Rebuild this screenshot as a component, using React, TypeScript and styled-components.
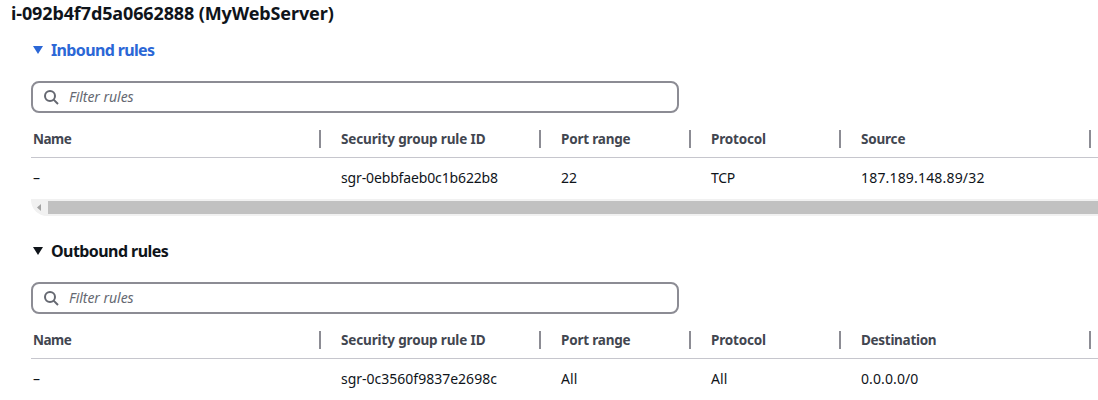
import React from "react";
import styled, { createGlobalStyle } from "styled-components";

const GlobalStyle = createGlobalStyle`
  * { box-sizing: border-box; }
  body {
    margin: 0;
    overflow: hidden;
    background: #fff;
    color: #0f141a;
    font-family: "Noto Sans", "Open Sans", sans-serif;
    font-size: 14px;
  }
`;

const Page = styled.main`
  width: 100%;
  height: 400px;
  overflow: hidden;
  display: flex;
  flex-direction: column;
`;

const Title = styled.h1<{ $track: number }>`
  margin: 0;
  padding-left: 11px;
  height: 26px;
  line-height: 26px;
  font-size: 18px;
  font-weight: 700;
  letter-spacing: ${(p) => p.$track}px;
  white-space: nowrap;
`;

const Section = styled.section`
  flex: none;
  height: 201px;
  display: flex;
  flex-direction: column;
  padding-left: 31px;
`;

const SectionToggle = styled.div<{ $active?: boolean }>`
  height: 24px;
  margin: 12px 0 19px;
  display: flex;
  align-items: center;
  color: ${(p) => (p.$active ? "#2b67d6" : "#0f141a")};
`;

const Caret = styled.svg`
  width: 10px;
  height: 8px;
  margin: 0 8px 1px 2px;
  fill: currentColor;
`;

const SectionName = styled.h2<{ $track: number }>`
  margin: 0;
  font-size: 16px;
  line-height: 24px;
  font-weight: 700;
  letter-spacing: ${(p) => p.$track}px;
`;

const FilterBox = styled.div`
  flex: none;
  width: 648px;
  height: 32px;
  border: 2px solid #8c8c94;
  border-radius: 8px;
  display: flex;
  align-items: center;
  padding-left: 10px;
  gap: 10px;
`;

const SearchIcon = styled.svg`
  width: 16px;
  height: 16px;
  fill: none;
  stroke: #656871;
  stroke-width: 2;
`;

const Placeholder = styled.span<{ $track: number }>`
  color: #656871;
  font-style: italic;
  line-height: 20px;
  letter-spacing: ${(p) => p.$track}px;
`;

const Row = styled.div<{ $head?: boolean }>`
  flex: none;
  display: grid;
  grid-template-columns: 290px 220px 150px 150px 250px 1fr;
  align-items: center;
  height: ${(p) => (p.$head ? "34px" : "41px")};
  margin-top: ${(p) => (p.$head ? "11px" : "0")};
  border-bottom: ${(p) => (p.$head ? "1px solid #c6c6cd" : "0")};
`;

const Cell = styled.div<{ $track: number; $head?: boolean }>`
  height: 18px;
  line-height: 18px;
  padding-left: 20px;
  margin-top: ${(p) => (p.$head ? "-3px" : "-2px")};
  border-right: ${(p) => (p.$head ? "2px solid #8c8c94" : "0")};
  color: ${(p) => (p.$head ? "#424650" : "#0f141a")};
  font-size: ${(p) => (p.$head ? "13.5px" : "14px")};
  font-weight: ${(p) => (p.$head ? 700 : 400)};
  letter-spacing: ${(p) => p.$track}px;
  white-space: nowrap;
  &:first-child { padding-left: 2px; }
`;

const ScrollTrack = styled.div`
  flex: none;
  height: 17px;
  background: #f1f1f1;
  border-bottom-left-radius: 16px;
  display: flex;
  align-items: center;
`;

const ScrollArrow = styled.svg`
  width: 4px;
  height: 7px;
  margin: 0 7px 0 6px;
  fill: #a3a3a3;
`;

const ScrollThumb = styled.div`
  flex: 1;
  height: 13px;
  background: #c1c1c1;
`;

type Text = [string, number];

interface RulesProps {
  name: Text;
  active?: boolean;
  heads: Text[];
  cells: Text[];
  scroll?: boolean;
}

function Rules({ name, active, heads, cells, scroll }: RulesProps) {
  return (
    <Section>
      <SectionToggle $active={active}>
        <Caret viewBox="0 0 10 8">
          <path d="M0 0h10L5 8z" />
        </Caret>
        <SectionName $track={name[1]}>{name[0]}</SectionName>
      </SectionToggle>
      <FilterBox>
        <SearchIcon viewBox="0 0 16 16">
          <circle cx="7" cy="7" r="5" />
          <path d="M10.6 10.6 15 15" />
        </SearchIcon>
        <Placeholder $track={-0.04}>Filter rules</Placeholder>
      </FilterBox>
      <Row $head>
        {heads.map(([text, track]) => (
          <Cell key={text} $head $track={track}>{text}</Cell>
        ))}
      </Row>
      <Row>
        {cells.map(([text, track], i) => (
          <Cell key={i} $track={track}>{text}</Cell>
        ))}
      </Row>
      {scroll && (
        <ScrollTrack>
          <ScrollArrow viewBox="0 0 4 7">
            <path d="M4 0v7L0 3.5z" />
          </ScrollArrow>
          <ScrollThumb />
        </ScrollTrack>
      )}
    </Section>
  );
}

const commonHeads: Text[] = [
  ["Name", -0.5],
  ["Security group rule ID", -0.14],
  ["Port range", -0.2],
  ["Protocol", -0.2],
];

export default function App() {
  return (
    <Page>
      <GlobalStyle />
      <Title $track={-0.12}>i-092b4f7d5a0662888 (MyWebServer)</Title>
      <Rules
        name={["Inbound rules", -0.64]}
        active
        heads={[...commonHeads, ["Source", -0.2]]}
        cells={[["–", 0], ["sgr-0ebbfaeb0c1b622b8", -0.14], ["22", 0], ["TCP", -0.3], ["187.189.148.89/32", 0.18]]}
        scroll
      />
      <Rules
        name={["Outbound rules", -0.57]}
        heads={[...commonHeads, ["Destination", -0.3]]}
        cells={[["–", 0], ["sgr-0c3560f9837e2698c", 0], ["All", 0.1], ["All", 0.1], ["0.0.0.0/0", 0.1]]}
      />
    </Page>
  );
}
